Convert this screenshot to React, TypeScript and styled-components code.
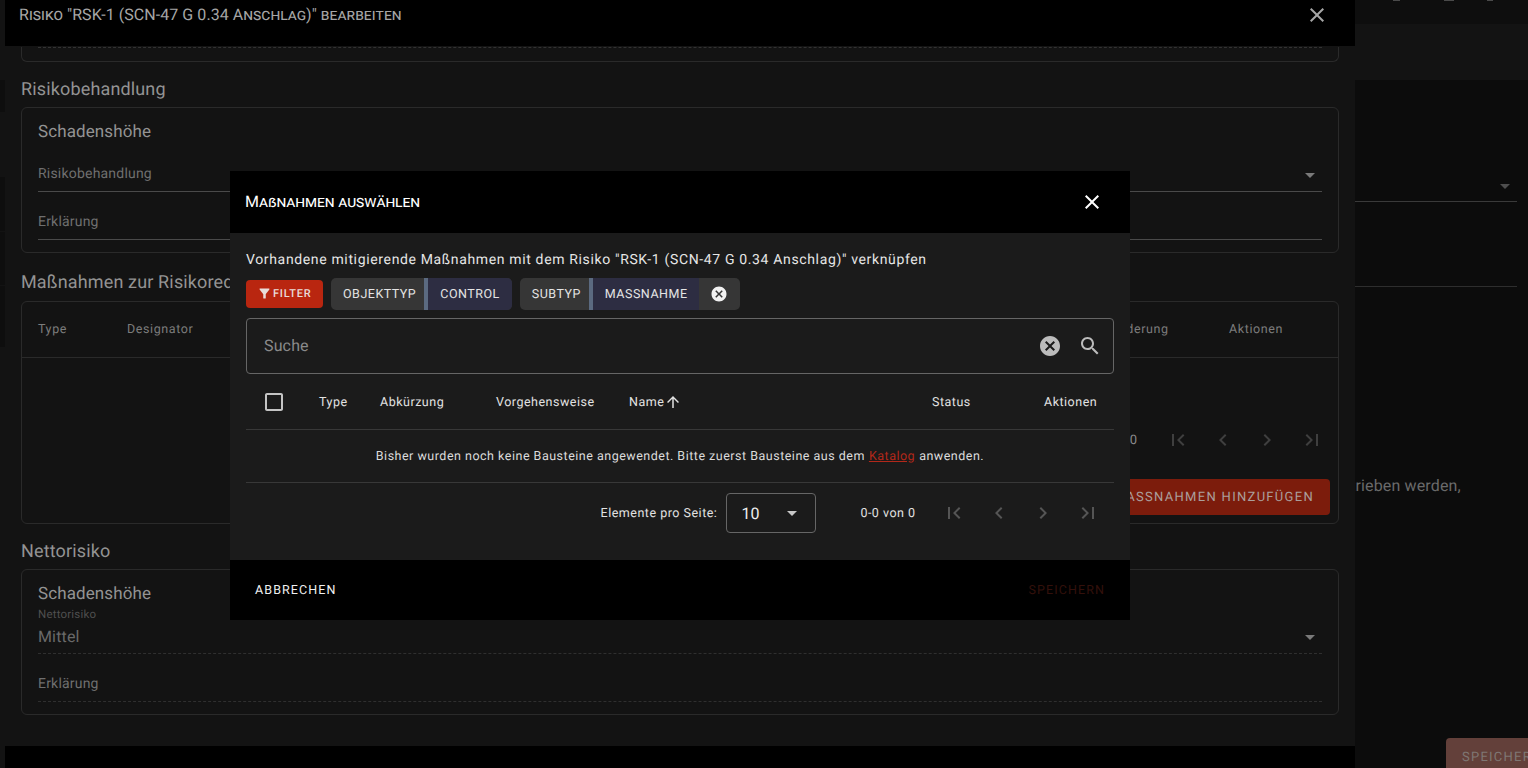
import React from "react";
import styled, { createGlobalStyle } from "styled-components";

const Global = createGlobalStyle`
  html, body { margin: 0; padding: 0; background: #0c0c0c; font-family: Roboto, "Liberation Sans", sans-serif; text-rendering: geometricPrecision; }
  * { box-sizing: border-box; }
`;

const P = {
  close: "M19 6.41L17.59 5 12 10.59 6.41 5 5 6.41 10.59 12 5 17.59 6.41 19 12 13.41 17.59 19 19 17.59 13.41 12z",
  search: "M15.5 14h-.79l-.28-.27C15.41 12.59 16 11.11 16 9.5 16 5.91 13.09 3 9.5 3S3 5.91 3 9.5 5.91 16 9.5 16c1.61 0 3.09-.59 4.23-1.57l.27.28v.79l5 4.99L20.49 19l-4.99-5zm-6 0C7.01 14 5 11.99 5 9.5S7.01 5 9.5 5 14 7.01 14 9.5 11.99 14 9.5 14z",
  cancel: "M12 2C6.47 2 2 6.47 2 12s4.47 10 10 10 10-4.47 10-10S17.53 2 12 2zm5 13.59L15.59 17 12 13.41 8.41 17 7 15.59 10.59 12 7 8.41 8.41 7 12 10.59 15.59 7 17 8.41 13.41 12 17 15.59z",
  drop: "M7 10l5 5 5-5z",
  up: "M4 12l1.41 1.41L11 7.83V20h2V7.83l5.58 5.59L20 12l-8-8-8 8z",
  box: "M19 5v14H5V5h14m0-2H5c-1.1 0-2 .9-2 2v14c0 1.1.9 2 2 2h14c1.1 0 2-.9 2-2V5c0-1.1-.9-2-2-2z",
  filter: "M4.25 5.61C6.27 8.2 10 13 10 13v6c0 .55.45 1 1 1h2c.55 0 1-.45 1-1v-6s3.72-4.8 5.74-7.39c.51-.66.04-1.61-.79-1.61H5.04c-.83 0-1.3.95-.79 1.61z",
  first: "M18.41 16.59L13.82 12l4.59-4.59L17 6l-6 6 6 6zM6 6h2v12H6z",
  prev: "M15.41 7.41L14 6l-6 6 6 6 1.41-1.41L10.83 12z",
  next: "M10 6L8.59 7.41 13.17 12l-4.58 4.59L10 18l6-6z",
  last: "M5.59 7.41L10.18 12l-4.59 4.59L7 18l6-6-6-6zM16 6h2v12h-2z",
};

const Icon = ({ d, size = 24, color = "currentColor" }: { d: string; size?: number; color?: string }) => (
  <svg width={size} height={size} viewBox="0 0 24 24" fill={color} style={{ display: "block", flex: "none" }}>
    <path d={d} />
  </svg>
);

const Page = styled.div`
  position: relative;
  width: 1528px;
  height: 768px;
  overflow: hidden;
  background: #0c0c0c;
`;

/* Background page, right of the middle dialog */
const BackPage = styled.div`
  height: 768px;
  padding-left: 1355px;
  display: flex;
  flex-direction: column;
`;
const BackTop = styled.div`
  height: 24px;
  background: #0e0e0e;
  flex: none;
  display: flex;
  align-items: flex-start;
  padding-left: 38px;
`;
const BackMark = styled.span<{ $w: number; $ml: number }>`
  width: ${(p) => p.$w}px;
  height: 1px;
  margin-left: ${(p) => p.$ml}px;
  background: #4a4a4a;
`;
const BackBand = styled.div`
  height: 56px;
  background: #131313;
  flex: none;
`;
const BackField = styled.div`
  height: 122px;
  width: 162px;
  border-bottom: 1px solid #3a3a3a;
  position: relative;
  flex: none;
  color: #4e4e4e;
`;
const BackCaret = styled.span`
  position: absolute;
  right: 0;
  bottom: 3px;
`;
const BackField2 = styled.div`
  height: 85px;
  width: 162px;
  border-bottom: 1px solid #2e2e2e;
  flex: none;
`;
const BackText = styled.div`
  margin-top: 189px;
  margin-left: -5px;
  height: 20px;
  font-size: 16px;
  line-height: 20px;
  letter-spacing: 0.15px;
  color: #6a6a6a;
  white-space: nowrap;
  flex: none;
`;
const BackSave = styled.div`
  margin-top: 242px;
  margin-left: 91px;
  width: 120px;
  height: 40px;
  padding: 11px 16px;
  border-radius: 4px;
  background: #63403a;
  color: #7f7773;
  font-size: 13px;
  letter-spacing: 1.25px;
  line-height: 18px;
  white-space: nowrap;
  flex: none;
`;

const LeftStrip = styled.div`
  position: absolute;
  left: 0;
  top: 0;
  width: 5px;
  height: 768px;
  background: #131313;
  display: flex;
  flex-direction: column;
  padding-top: 80px;
`;
const StripBlock = styled.div<{ $h: number; $top: number }>`
  height: ${(p) => p.$h}px;
  margin-top: ${(p) => p.$top}px;
  flex: none;
  background: #0e0e0e;
`;

/* Middle dialog */
const MidDialog = styled.div`
  position: absolute;
  left: 5px;
  top: 0;
  width: 1350px;
  height: 768px;
  background: #131313;
  display: flex;
  flex-direction: column;
`;
const MidHeader = styled.div`
  height: 46px;
  flex: none;
  background: #000;
  display: flex;
  align-items: flex-start;
  justify-content: space-between;
  padding: 3px 26px 0 14px;
  color: #a6a6a6;
`;
const MidTitle = styled.div`
  font-size: 16px;
  font-variant: small-caps;
  line-height: 24px;
  letter-spacing: 0.05px;
  white-space: nowrap;
`;
const MidClose = styled.div`
  color: #a6a6a6;
`;
const MidBody = styled.div`
  flex: 1;
  overflow: hidden;
  padding: 0 16px;
`;
const MidFooter = styled.div`
  height: 22px;
  flex: none;
  background: #000;
`;
const CardStub = styled.div`
  height: 15px;
  border: 1px solid #2a2a2a;
  border-top: 0;
  border-radius: 0 0 6px 6px;
  padding: 0 16px;
`;
const StubLine = styled.div`
  border-top: 1px dashed #333;
  margin-top: 1px;
`;
const SectionTitle = styled.div<{ $top: number }>`
  margin-top: ${(p) => p.$top}px;
  height: 26px;
  line-height: 28px;
  font-size: 18px;
  letter-spacing: 0.15px;
  color: #939393;
  white-space: nowrap;
`;
const Card = styled.div<{ $h: number; $top?: number }>`
  margin-top: ${(p) => p.$top ?? 5}px;
  height: ${(p) => p.$h}px;
  border: 1px solid #2a2a2a;
  border-radius: 6px;
  padding: 0 16px;
  position: relative;
`;
const CardHeading = styled.div`
  height: 24px;
  line-height: 24px;
  margin-top: 12px;
  font-size: 17px;
  letter-spacing: 0.1px;
  color: #939393;
`;
const FieldRow = styled.div<{ $h: number; $dashed?: boolean }>`
  height: ${(p) => p.$h}px;
  border-bottom: 1px ${(p) => (p.$dashed ? "dashed #2f2f2f" : "solid #4a4a4a")};
  display: flex;
  align-items: flex-end;
  justify-content: space-between;
  position: relative;
  color: #6f6f6f;
  font-size: 14px;
  letter-spacing: 0.2px;
`;
const FieldLabel = styled.span<{ $pb: number }>`
  padding-bottom: ${(p) => p.$pb}px;
  line-height: 20px;
`;
const FieldCaret = styled.span`
  color: #7a7a7a;
  margin-bottom: 4px;
`;
const SmallLabel = styled.div`
  height: 13px;
  line-height: 13px;
  font-size: 11.5px;
  letter-spacing: 0.2px;
  color: #4f4f4f;
  margin-top: 2px;
`;
const FieldValue = styled.span`
  font-size: 16px;
  line-height: 22px;
  padding-bottom: 5px;
  letter-spacing: 0.15px;
  color: #6a6a6a;
`;
const MidTableHead = styled.div`
  height: 56px;
  margin: 0 -16px;
  padding: 0 16px 1px;
  border-bottom: 1px solid #2a2a2a;
  display: flex;
  align-items: center;
  font-size: 12.5px;
  letter-spacing: 0.6px;
  color: #7c7c7c;
  position: relative;
`;
const MidCol = styled.span<{ $w: number }>`
  width: ${(p) => p.$w}px;
  flex: none;
`;
const MidPager = styled.div`
  display: flex;
  justify-content: flex-end;
  align-items: center;
  height: 24px;
  margin-top: 70px;
  margin-right: -12px;
  color: #3f3f3f;
  font-size: 13px;
`;
const MidPagerCount = styled.span`
  color: #8a8a8a;
  margin-right: 18px;
  letter-spacing: 0.5px;
`;
const MidPagerBtn = styled.span`
  width: 44.6px;
  display: flex;
  justify-content: center;
`;
const MidAddRow = styled.div`
  margin-top: 27px;
  display: flex;
  justify-content: flex-end;
  margin-right: -8px;
`;
const MidAdd = styled.div`
  height: 36px;
  padding: 0 16px 0 17px;
  border-radius: 4px;
  background: #7c1c0c;
  color: #ab9f9c;
  font-size: 13px;
  letter-spacing: 1.3px;
  line-height: 37px;
  white-space: nowrap;
`;

/* Front dialog */
const Dialog = styled.div`
  position: absolute;
  left: 230px;
  top: 171px;
  width: 900px;
  height: 449px;
  background: #1b1b1b;
  display: flex;
  flex-direction: column;
`;
const DialogHeader = styled.div`
  height: 62px;
  flex: none;
  background: #000;
  display: flex;
  align-items: center;
  justify-content: space-between;
  padding: 0 26px 0 15px;
  color: #fff;
`;
const DialogTitle = styled.div`
  font-size: 16px;
  font-variant: small-caps;
  letter-spacing: -0.05px;
  line-height: 24px;
`;
const DialogBody = styled.div`
  flex: 1;
  padding: 16px 16px 0;
  display: flex;
  flex-direction: column;
`;
const Intro = styled.div`
  height: 20px;
  line-height: 22px;
  font-size: 14px;
  letter-spacing: 0.645px;
  color: #e6e6e6;
  white-space: nowrap;
`;
const Filters = styled.div`
  margin-top: 9px;
  height: 32px;
  display: flex;
  align-items: center;
  gap: 8px;
`;
const FilterButton = styled.div`
  width: 77px;
  height: 28px;
  border-radius: 4px;
  background: #b92610;
  color: #e9dcd9;
  display: flex;
  align-items: center;
  padding: 0 0 1px 11px;
  gap: 1px;
  font-size: 11px;
  font-weight: 500;
  letter-spacing: 0.8px;
`;
const Chip = styled.div`
  height: 32px;
  border-radius: 5px;
  background: #363636;
  display: flex;
  align-items: stretch;
  overflow: hidden;
  color: #e4e4e4;
  font-size: 12.5px;
  letter-spacing: 0.5px;
  line-height: 33px;
  white-space: nowrap;
`;
const ChipKey = styled.span`
  padding: 0 8px 0 12px;
`;
const ChipValue = styled.span`
  background: #2d2d42;
  border-left: 4px solid #5b6a80;
  padding: 0 12px;
`;
const ChipClear = styled.span`
  display: flex;
  align-items: center;
  justify-content: center;
  width: 41px;
  padding-right: 2px;
  color: #f2f2f2;
`;
const SearchBox = styled.div`
  margin-top: 8px;
  height: 56px;
  border: 1px solid #666;
  border-radius: 4px;
  display: flex;
  align-items: center;
  padding: 0 11px 0 17px;
  flex: none;
`;
const SearchText = styled.span`
  flex: 1;
  font-size: 16px;
  letter-spacing: 0.15px;
  color: #8a8a8a;
  padding-bottom: 1px;
`;
const SearchClear = styled.span`
  color: #bcbcbc;
  margin-right: 16px;
`;
const SearchIcon = styled.span`
  color: #bcbcbc;
`;
const TableHead = styled.div`
  height: 56px;
  flex: none;
  display: grid;
  grid-template-columns: 57px 61px 116px 133px 303px 112px 86px;
  align-items: center;
  border-bottom: 1px solid #383838;
  padding-top: 1px;
  font-size: 12.5px;
  letter-spacing: 0.5px;
  color: #e2e2e2;
`;
const HeadCell = styled.div`
  padding-left: 16px;
  display: flex;
  align-items: center;
  white-space: nowrap;
`;
const EmptyRow = styled.div`
  height: 53px;
  flex: none;
  border-bottom: 1px solid #383838;
  display: flex;
  align-items: center;
  justify-content: center;
  font-size: 12.5px;
  letter-spacing: 0.5px;
  color: #dcdcdc;
  white-space: nowrap;
`;
const RedLink = styled.span`
  color: #b3281a;
  text-decoration: underline;
  margin: 0 4px;
`;
const Pager = styled.div`
  height: 60px;
  flex: none;
  display: flex;
  align-items: center;
  justify-content: flex-end;
  font-size: 12.5px;
  letter-spacing: 0.5px;
  color: #e2e2e2;
  padding-right: 4px;
`;
const PagerLabel = styled.span`
  margin-right: 9px;
`;
const PagerSelect = styled.div`
  width: 90px;
  height: 40px;
  border: 1px solid #666;
  border-radius: 4px;
  display: flex;
  align-items: center;
  justify-content: space-between;
  padding: 0 16px 0 14px;
  font-size: 16px;
  color: #efefef;
  letter-spacing: 0.15px;
`;
const SelectCaret = styled.span`
  color: #c8c8c8;
  margin-right: -5px;
`;
const PagerCount = styled.span`
  margin-left: 44px;
  margin-right: 16px;
`;
const PagerBtn = styled.span`
  width: 44.6px;
  display: flex;
  justify-content: center;
  color: #555;
`;
const DialogFooter = styled.div`
  height: 60px;
  flex: none;
  background: #000;
  display: flex;
  align-items: center;
  justify-content: space-between;
  padding: 0 25px;
  font-size: 12.5px;
  letter-spacing: 1.1px;
`;
const Cancel = styled.span`
  color: #f0f0f0;
`;
const SaveDisabled = styled.span`
  color: #33100b;
`;

const pagerIcons = [P.first, P.prev, P.next, P.last];

export default function App() {
  return (
    <Page>
      <Global />
      <BackPage>
        <BackTop>
          <BackMark $w={7} $ml={0} />
          <BackMark $w={10} $ml={44} />
          <BackMark $w={6} $ml={33} />
        </BackTop>
        <BackBand />
        <BackField>
          <BackCaret><Icon d={P.drop} /></BackCaret>
        </BackField>
        <BackField2 />
        <BackText>trieben werden,</BackText>
        <BackSave>SPEICHERN</BackSave>
      </BackPage>
      <LeftStrip>
        <StripBlock $h={32} $top={0} />
        <StripBlock $h={54} $top={65} />
        <StripBlock $h={53} $top={1} />
        <StripBlock $h={61} $top={1} />
      </LeftStrip>

      <MidDialog>
        <MidHeader>
          <MidTitle>Risiko "RSK-1 (SCN-47 G 0.34 Anschlag)" bearbeiten</MidTitle>
          <MidClose><Icon d={P.close} /></MidClose>
        </MidHeader>
        <MidBody>
          <CardStub><StubLine /></CardStub>
          <SectionTitle $top={14}>Risikobehandlung</SectionTitle>
          <Card $h={146} $top={5}>
            <CardHeading>Schadenshöhe</CardHeading>
            <FieldRow $h={48}>
              <FieldLabel $pb={7}>Risikobehandlung</FieldLabel>
              <FieldCaret><Icon d={P.drop} /></FieldCaret>
            </FieldRow>
            <FieldRow $h={48}>
              <FieldLabel $pb={7}>Erklärung</FieldLabel>
            </FieldRow>
          </Card>
          <SectionTitle $top={16}>Maßnahmen zur Risikoreduzierung</SectionTitle>
          <Card $h={223} $top={6}>
            <MidTableHead>
              <MidCol $w={89}>Type</MidCol>
              <MidCol $w={983}>Designator</MidCol>
              <MidCol $w={119}>Änderung</MidCol>
              <MidCol $w={60}>Aktionen</MidCol>
            </MidTableHead>
            <MidPager>
              <MidPagerCount>0</MidPagerCount>
              {pagerIcons.map((d) => (
                <MidPagerBtn key={d}><Icon d={d} /></MidPagerBtn>
              ))}
            </MidPager>
            <MidAddRow>
              <MidAdd>MASSNAHMEN HINZUFÜGEN</MidAdd>
            </MidAddRow>
          </Card>
          <SectionTitle $top={14}>Nettorisiko</SectionTitle>
          <Card $h={146} $top={5}>
            <CardHeading>Schadenshöhe</CardHeading>
            <SmallLabel>Nettorisiko</SmallLabel>
            <FieldRow $h={33} $dashed>
              <FieldValue>Mittel</FieldValue>
              <FieldCaret><Icon d={P.drop} /></FieldCaret>
            </FieldRow>
            <FieldRow $h={48} $dashed>
              <FieldLabel $pb={7}>Erklärung</FieldLabel>
            </FieldRow>
          </Card>
        </MidBody>
        <MidFooter />
      </MidDialog>

      <Dialog>
        <DialogHeader>
          <DialogTitle>Maßnahmen auswählen</DialogTitle>
          <Icon d={P.close} />
        </DialogHeader>
        <DialogBody>
          <Intro>Vorhandene mitigierende Maßnahmen mit dem Risiko "RSK-1 (SCN-47 G 0.34 Anschlag)" verknüpfen</Intro>
          <Filters>
            <FilterButton><Icon d={P.filter} size={15} />FILTER</FilterButton>
            <Chip>
              <ChipKey>OBJEKTTYP</ChipKey>
              <ChipValue>CONTROL</ChipValue>
            </Chip>
            <Chip>
              <ChipKey>SUBTYP</ChipKey>
              <ChipValue>MASSNAHME</ChipValue>
              <ChipClear><Icon d={P.cancel} size={18} /></ChipClear>
            </Chip>
          </Filters>
          <SearchBox>
            <SearchText>Suche</SearchText>
            <SearchClear><Icon d={P.cancel} /></SearchClear>
            <SearchIcon><Icon d={P.search} /></SearchIcon>
          </SearchBox>
          <TableHead>
            <HeadCell><Icon d={P.box} color="#c4c4c4" /></HeadCell>
            <HeadCell>Type</HeadCell>
            <HeadCell>Abkürzung</HeadCell>
            <HeadCell>Vorgehensweise</HeadCell>
            <HeadCell>Name<Icon d={P.up} size={18} /></HeadCell>
            <HeadCell>Status</HeadCell>
            <HeadCell>Aktionen</HeadCell>
          </TableHead>
          <EmptyRow>
            Bisher wurden noch keine Bausteine angewendet. Bitte zuerst Bausteine aus dem
            <RedLink>Katalog</RedLink>
            anwenden.
          </EmptyRow>
          <Pager>
            <PagerLabel>Elemente pro Seite:</PagerLabel>
            <PagerSelect>
              10
              <SelectCaret><Icon d={P.drop} /></SelectCaret>
            </PagerSelect>
            <PagerCount>0-0 von 0</PagerCount>
            {pagerIcons.map((d) => (
              <PagerBtn key={d}><Icon d={d} /></PagerBtn>
            ))}
          </Pager>
        </DialogBody>
        <DialogFooter>
          <Cancel>ABBRECHEN</Cancel>
          <SaveDisabled>SPEICHERN</SaveDisabled>
        </DialogFooter>
      </Dialog>
    </Page>
  );
}
